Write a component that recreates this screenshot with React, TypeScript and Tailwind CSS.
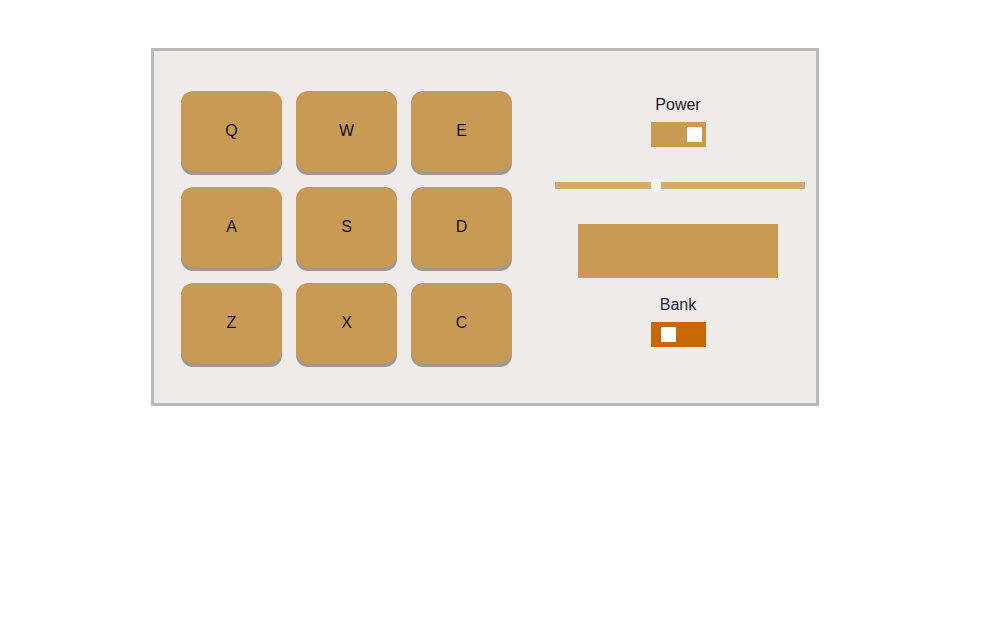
const pads = ["Q", "W", "E", "A", "S", "D", "Z", "X", "C"];

function Toggle({ on, color }: { on: boolean; color: string }) {
  return (
    <div
      className={`flex h-[25px] w-[55px] items-center ${color} ${
        on ? "justify-end pr-[4px]" : "justify-start pl-[10px]"
      }`}
    >
      <div className="h-[15px] w-[15px] bg-white" />
    </div>
  );
}

export default function App() {
  return (
    <div className="min-h-[633px] bg-white font-['Liberation_Sans',Arial,sans-serif]">
      <div className="ml-[151px] pt-[48px]">
        <div className="flex h-[358px] w-[668px] border-[3px] border-[#bcb8b5] bg-[#efebe8]">
          <div className="grid grid-cols-[101px_101px_101px] gap-x-[14px] gap-y-[16px] pl-[27px] pt-[40px] content-start">
            {pads.map((k) => (
              <button
                key={k}
                className="flex h-[80px] items-center justify-center rounded-[12px] bg-[#c99a54] text-[16px] text-[#111] shadow-[0_4px_0_#9c9996]"
              >
                {k}
              </button>
            ))}
          </div>

          <div className="ml-[43px] flex w-[250px] flex-col pt-[45px]">
            <div className="flex w-[246px] flex-col items-center">
              <div className="text-[16px] leading-[18px] text-[#222]">Power</div>
              <div className="mt-[8px]">
                <Toggle on color="bg-[#c99a54]" />
              </div>
            </div>

            <div className="relative mt-[31px] h-[14px] w-[250px]">
              <div className="absolute left-0 right-0 top-[4px] h-[7px] bg-[#d3aa6f]" />
              <div className="absolute left-[96px] top-0 h-[14px] w-[10px] rounded-[5px] bg-[#f8f8f8]" />
            </div>

            <div className="flex w-[246px] flex-col items-center">
              <div className="mt-[32px] h-[54px] w-[200px] bg-[#c99a54]" />
              <div className="mt-[18px] text-[16px] leading-[18px] text-[#1b2a44]">Bank</div>
              <div className="mt-[8px]">
                <Toggle on={false} color="bg-[#c76903]" />
              </div>
            </div>
          </div>
        </div>
      </div>
    </div>
  );
}
